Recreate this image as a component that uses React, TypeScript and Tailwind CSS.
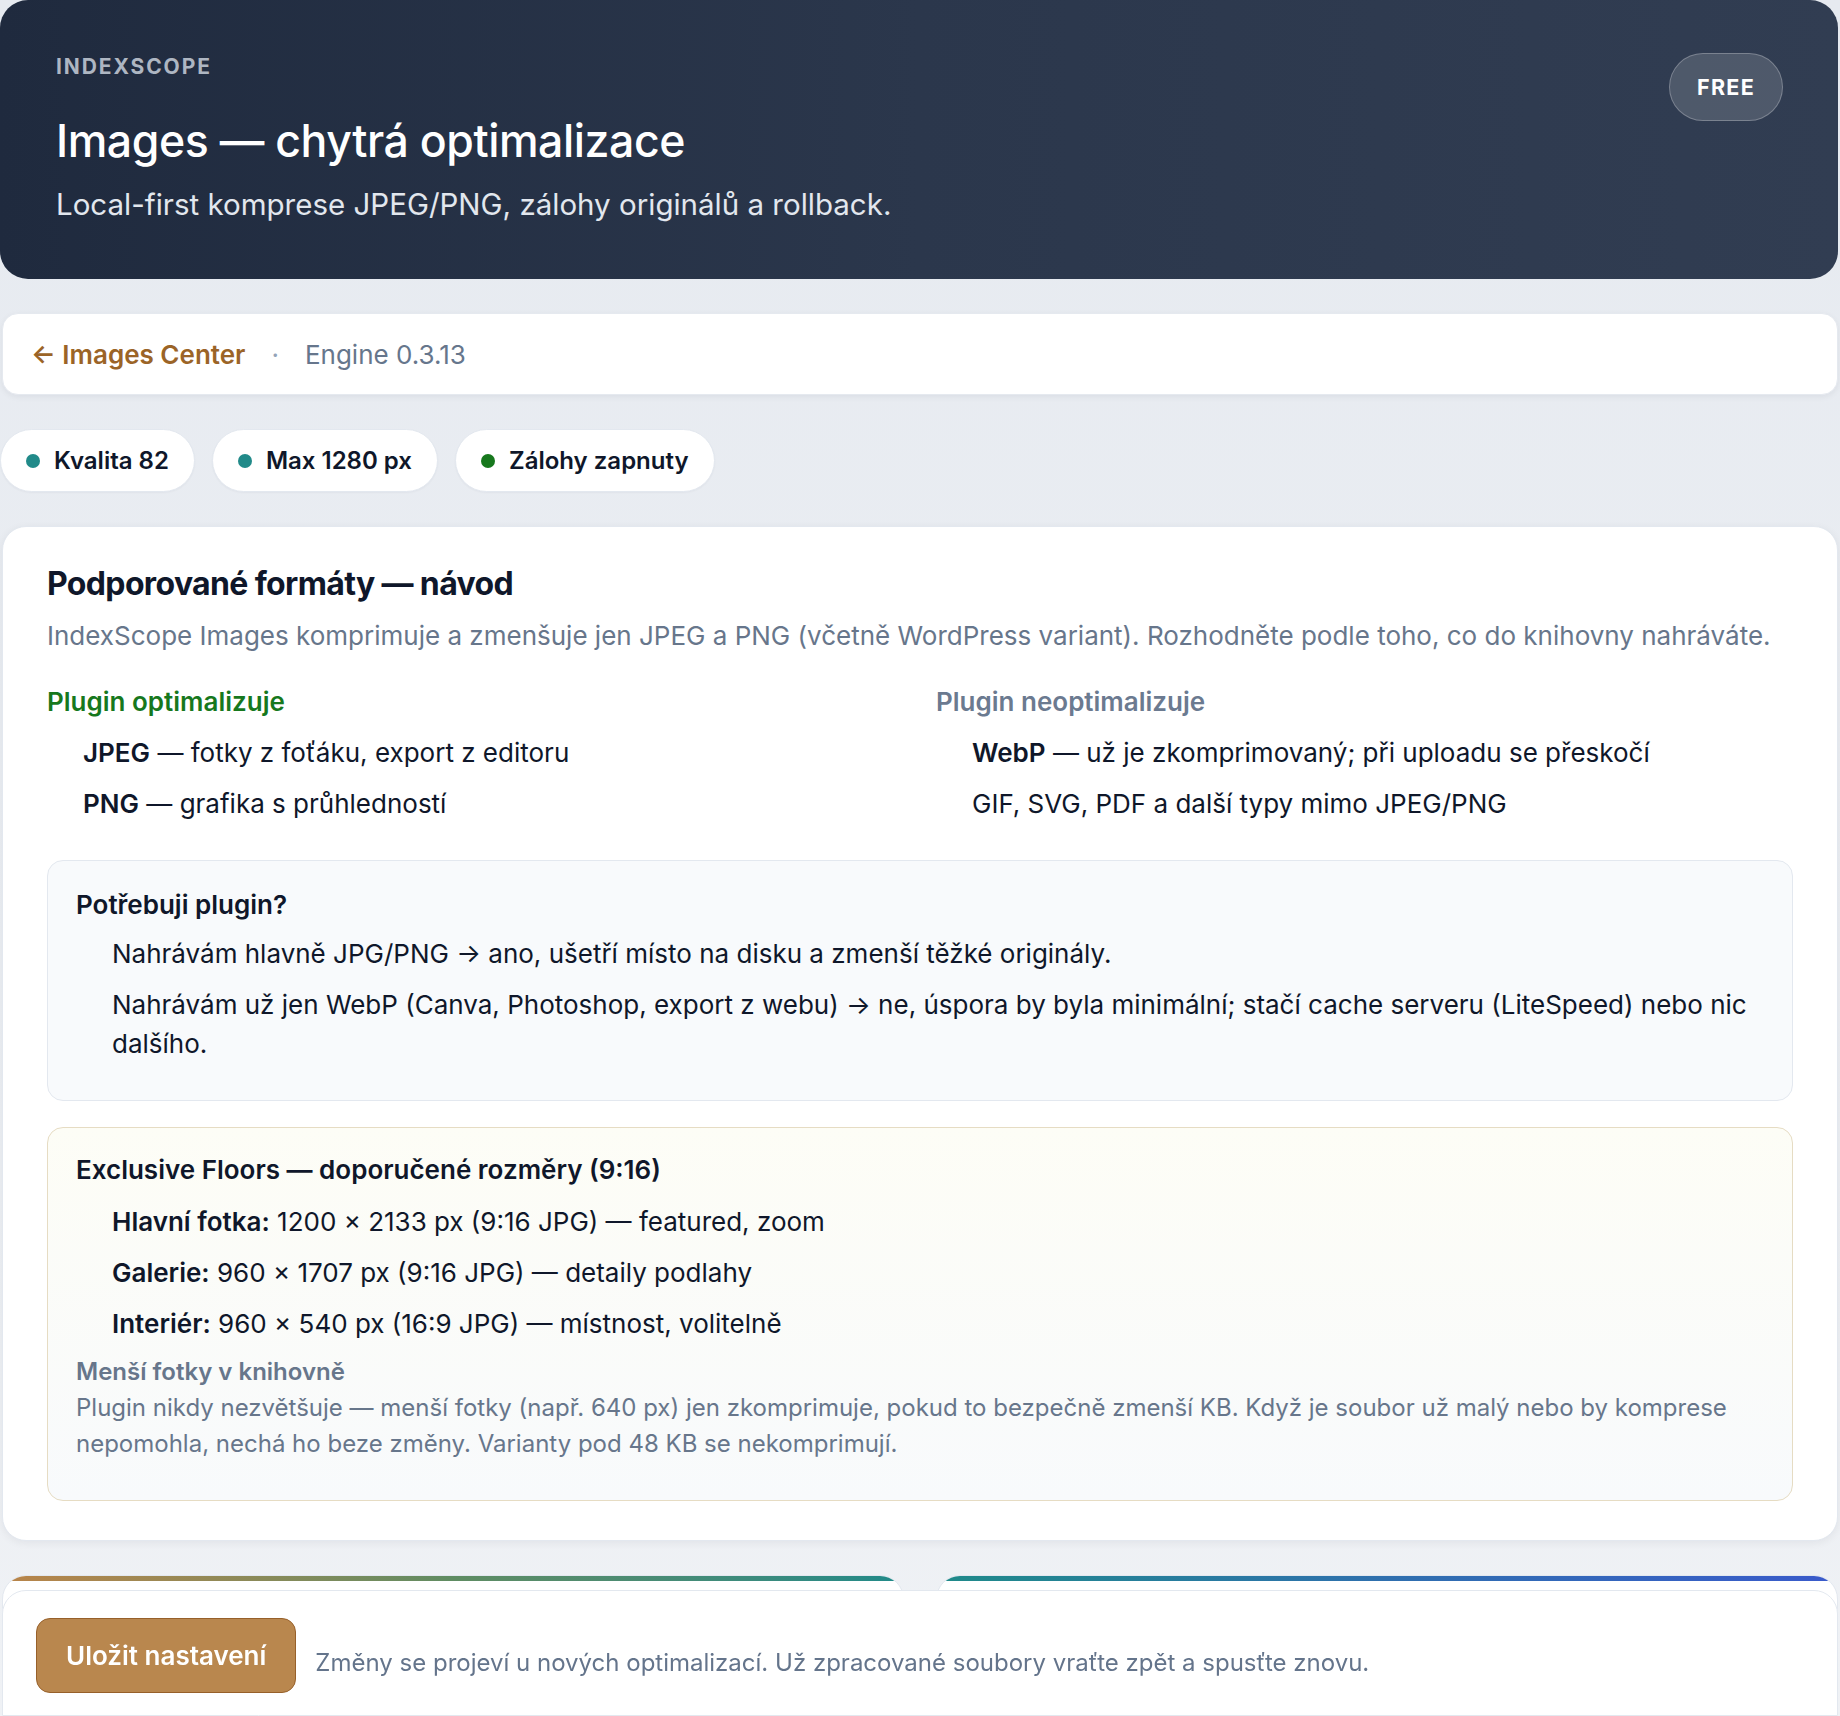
const font = { fontFamily: 'Inter, "Noto Sans", sans-serif' }

type Row = { label?: string; text: string }

const optimized: Row[] = [
  { label: 'JPEG', text: ' — fotky z foťáku, export z editoru' },
  { label: 'PNG', text: ' — grafika s průhledností' },
]

const skipped: Row[] = [
  { label: 'WebP', text: ' — už je zkomprimovaný; při uploadu se přeskočí' },
  { text: 'GIF, SVG, PDF a další typy mimo JPEG/PNG' },
]

const sizes: Row[] = [
  { label: 'Hlavní fotka:', text: ' 1200 × 2133 px (9:16 JPG) — featured, zoom' },
  { label: 'Galerie:', text: ' 960 × 1707 px (9:16 JPG) — detaily podlahy' },
  { label: 'Interiér:', text: ' 960 × 540 px (16:9 JPG) — místnost, volitelně' },
]

function RowList({ rows }: { rows: Row[] }) {
  return (
    <ul className="flex flex-col gap-[12px] pl-[36px] text-[26px] leading-[39px] text-[#0f172a]">
      {rows.map((r, i) => (
        <li key={i}>
          {r.label && <strong className="font-semibold">{r.label}</strong>}
          {r.text}
        </li>
      ))}
    </ul>
  )
}

function Chip({ dot, label }: { dot: string; label: string }) {
  return (
    <div className="flex h-[63px] items-center gap-[14px] rounded-full border border-[#e3e8ef] bg-white px-[25px] shadow-[0_1px_2px_rgba(15,23,42,0.04)]">
      <span className={`h-[14px] w-[14px] rounded-full ${dot}`} />
      <span className="text-[24px] font-semibold text-[#0f172a]">{label}</span>
    </div>
  )
}

export default function App() {
  return (
    <div
      style={font}
      className="min-h-[1716px] bg-gradient-to-b from-[#e6eaf0] to-[#f1f3f6] pb-[200px]"
    >
      <div className="flex flex-col gap-[34px]">
        {/* Hero */}
        <header className="mr-[2px] flex items-start justify-between rounded-[28px] bg-gradient-to-r from-[#1f2a3e] via-[#2b374c] to-[#313d52] pb-[53px] pl-[56px] pr-[55px] pt-[53px]">
          <div>
            <p className="text-[21px] font-bold leading-[28px] tracking-[0.09em] text-[#aeb6c2]">INDEXSCOPE</p>
            <h1 className="mt-[33px] text-[44.6px] font-medium leading-[54px] tracking-[-0.01em] text-white">
              Images — chytrá optimalizace
            </h1>
            <p className="mt-[14px] text-[29.5px] leading-[44px] text-[#e2e7ee]">
              Local-first komprese JPEG/PNG, zálohy originálů a rollback.
            </p>
          </div>
          <span className="flex h-[68px] items-center rounded-full border border-white/25 bg-white/15 px-[27px] text-[21.5px] font-bold tracking-[0.06em] text-white">
            FREE
          </span>
        </header>

        {/* Breadcrumb bar */}
        <nav className="mx-[2px] flex h-[82px] items-center gap-[26px] rounded-[16px] border border-[#e5e9ef] bg-white px-[28px] text-[26px] shadow-[0_2px_6px_rgba(15,23,42,0.06)]">
          <a className="font-semibold text-[#9b6427]">← Images Center</a>
          <span className="text-[#94a3b8]">·</span>
          <span className="text-[#66768c]">Engine 0.3.13</span>
        </nav>

        {/* Settings summary */}
        <div className="flex gap-[17px]">
          <Chip dot="bg-[#218a89]" label="Kvalita 82" />
          <Chip dot="bg-[#218a89]" label="Max 1280 px" />
          <Chip dot="bg-[#17781d]" label="Zálohy zapnuty" />
        </div>

        {/* Formats guide */}
        <section className="mx-[2px] rounded-[24px] border border-[#e3e8ef] bg-white px-[44px] pb-[39px] pt-[37px] shadow-[0_2px_8px_rgba(15,23,42,0.06)]">
          <h2 className="text-[32px] font-bold leading-[40px] tracking-[-0.02em] text-[#0f172a]">
            Podporované formáty — návod
          </h2>
          <p className="mt-[12px] text-[26px] leading-[39px] text-[#67768b]">
            IndexScope Images komprimuje a zmenšuje jen JPEG a PNG (včetně WordPress variant). Rozhodněte podle toho, co do knihovny nahráváte.
          </p>

          <div className="mt-[27px] grid grid-cols-2 gap-[32px]">
            <div>
              <h3 className="mb-[12px] text-[26px] font-semibold leading-[39px] text-[#17781d]">Plugin optimalizuje</h3>
              <RowList rows={optimized} />
            </div>
            <div>
              <h3 className="mb-[12px] text-[26px] font-semibold leading-[39px] text-[#6b7a90]">Plugin neoptimalizuje</h3>
              <RowList rows={skipped} />
            </div>
          </div>

          <div className="mt-[37px] rounded-[16px] border-[1.5px] border-[#e3e8ef] bg-[#f8fafc] pb-[37px] pl-[28px] pr-[28px] pt-[24px]">
            <h4 className="mb-[10px] text-[26px] font-semibold leading-[39px] text-[#0f172a]">Potřebuji plugin?</h4>
            <RowList
              rows={[
                { text: 'Nahrávám hlavně JPG/PNG → ano, ušetří místo na disku a zmenší těžké originály.' },
                { text: 'Nahrávám už jen WebP (Canva, Photoshop, export z webu) → ne, úspora by byla minimální; stačí cache serveru (LiteSpeed) nebo nic dalšího.' },
              ]}
            />
          </div>

          <div className="mt-[26px] rounded-[16px] border-[1.5px] border-[#e6dcc3] bg-gradient-to-b from-[#fdfdf6] to-[#f8fafc] pb-[38px] pl-[28px] pr-[28px] pt-[22px]">
            <h4 className="mb-[13px] text-[26px] font-semibold leading-[39px] text-[#0f172a]">
              Exclusive Floors — doporučené rozměry (9:16)
            </h4>
            <RowList rows={sizes} />
            <p className="mt-[11px] text-[24px] font-semibold leading-[36px] text-[#67768b]">Menší fotky v knihovně</p>
            <p className="text-[24px] leading-[36px] text-[#67768b]">
              Plugin nikdy nezvětšuje — menší fotky (např. 640 px) jen zkomprimuje, pokud to bezpečně zmenší KB. Když je soubor už malý nebo by komprese nepomohla, nechá ho beze změny. Varianty pod 48 KB se nekomprimují.
            </p>
          </div>
        </section>

        {/* Compression + output cards, sitting under the save bar */}
        <div className="mx-[2px] grid grid-cols-2 gap-[32px]">
          <div className="h-[320px] overflow-hidden rounded-[24px] border border-[#e3e8ef] bg-white">
            <div className="h-[5px] bg-gradient-to-r from-[#b98449] via-[#5f8c62] to-[#1f8a89]" />
          </div>
          <div className="h-[320px] overflow-hidden rounded-[24px] border border-[#e3e8ef] bg-white">
            <div className="h-[5px] bg-gradient-to-r from-[#1f8a89] via-[#2f6fae] to-[#3a5acb]" />
          </div>
        </div>
      </div>

      {/* Save bar */}
      <footer className="fixed bottom-0 left-[2px] right-[2px] flex items-center gap-[19px] rounded-t-[24px] border border-[#e3e8ef] bg-white/[0.96] px-[33px] pb-[22px] pt-[27px] backdrop-blur-[3px]">
        <button className="h-[75px] rounded-[14px] border-[1.5px] border-[#97602a] bg-[#b9874e] px-[29px] text-[26px] font-semibold text-white">
          Uložit nastavení
        </button>
        <span className="pt-[14px] text-[24px] text-[#64748b]">
          Změny se projeví u nových optimalizací. Už zpracované soubory vraťte zpět a spusťte znovu.
        </span>
      </footer>
    </div>
  )
}
